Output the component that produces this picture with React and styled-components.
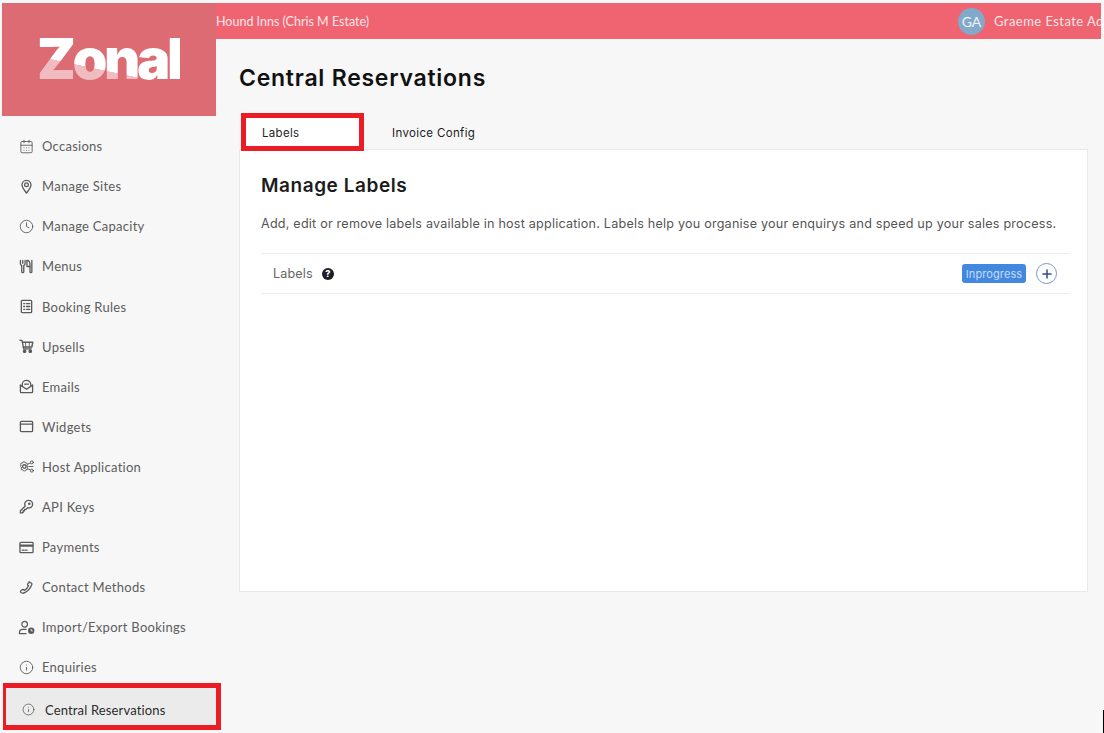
import React from 'react';
import styled, { createGlobalStyle } from 'styled-components';
import { CalendarDays, Clock, Info, Plus } from 'lucide-react';

const Global = createGlobalStyle`
  html, body { margin: 0; padding: 0; background: #f7f7f7; }
  body { overflow: hidden; font-family: "Lato", "Open Sans", sans-serif; }
  * { box-sizing: border-box; }
`;

const Page = styled.div`
  width: 1104px;
  height: 733px;
  padding: 3px 3px 0 2px;
  display: grid;
  grid-template-columns: 214px 1fr;
  grid-template-rows: 36px 1fr;
  background: #f7f7f7;
  position: relative;
  overflow: hidden;
`;

const EdgeMark = styled.span`
  position: absolute;
  right: 0;
  bottom: 0;
  width: 1px;
  height: 23px;
  background: #000;
`;

const Side = styled.div`
  grid-row: 1 / span 2;
  grid-column: 1;
  display: flex;
  flex-direction: column;
`;

const LogoBox = styled.div`
  height: 113px;
  background: #dc6b73;
  display: flex;
  align-items: center;
  padding-left: 35px;
`;

const Wordmark = styled.span`
  font-family: "Inter", sans-serif;
  font-weight: 900;
  font-size: 56px;
  line-height: 1;
  letter-spacing: -3.4px;
  margin-top: -1px;
  color: transparent;
  background: linear-gradient(192deg, #fff 0 64%, #f0bcc0 64.5% 100%);
  -webkit-background-clip: text;
  background-clip: text;
`;

const Nav = styled.nav`
  display: flex;
  flex-direction: column;
  padding-top: 10.1px;
`;

const NavItem = styled.div`
  height: 40.1px;
  display: flex;
  align-items: center;
  gap: 8px;
  padding-left: 17px;
  font-size: 13px;
  letter-spacing: 0.27px;
  color: #5d5d5d;
  svg { width: 15px; height: 15px; flex: none; stroke-width: 1.4; color: #5a5a5a; }
`;

const ActiveItem = styled.div`
  height: 47px;
  width: 218px;
  margin: -4.5px 0 0 1px;
  border: 5px solid #ec1c24;
  border-left-width: 3px;
  background: #ebebeb;
  display: flex;
  align-items: center;
  gap: 10px;
  padding: 7px 0 0 16px;
  font-size: 13px;
  letter-spacing: 0.15px;
  color: #2c2c2c;
  svg { width: 13px; height: 13px; flex: none; stroke-width: 1.4; color: #555; }
`;

const TopBar = styled.header`
  grid-column: 2;
  grid-row: 1;
  background: #f06472;
  color: #fde4e6;
  display: flex;
  align-items: center;
  justify-content: space-between;
  white-space: nowrap;
  overflow: hidden;
`;

const Estate = styled.span`
  font-size: 12.5px;
`;

const User = styled.div`
  display: flex;
  align-items: center;
  gap: 9px;
  width: 143px;
  flex: none;
  font-size: 13px;
  letter-spacing: 0.45px;
`;

const Avatar = styled.span`
  width: 27px;
  height: 27px;
  border-radius: 50%;
  background: #82a9c9;
  color: #eef3f7;
  font-size: 14px;
  letter-spacing: 0;
  display: flex;
  align-items: center;
  justify-content: center;
  flex: none;
`;

const Main = styled.main`
  grid-column: 2;
  grid-row: 2;
  padding: 0 14px 0 23px;
  display: flex;
  flex-direction: column;
  font-family: "Inter", "Open Sans", sans-serif;
`;

const Title = styled.h1`
  margin: 24px 0 0;
  font-size: 23px;
  line-height: 30px;
  font-weight: 600;
  color: #111;
  letter-spacing: 0.75px;
`;

const Tabs = styled.div`
  display: flex;
  margin-top: 20px;
  margin-left: 2px;
  position: relative;
  z-index: 1;
`;

const ActiveTab = styled.div`
  width: 123px;
  height: 38px;
  background: #fff;
  border: 5px solid #ec1c24;
  display: flex;
  align-items: center;
  padding: 1px 0 0 16px;
  font-size: 11.5px;
  letter-spacing: 0.3px;
  color: #222;
`;

const Tab = styled.div`
  height: 38px;
  display: flex;
  align-items: center;
  padding: 1px 0 0 28px;
  font-size: 11.5px;
  letter-spacing: 0.35px;
  color: #222;
`;

const Card = styled.section`
  height: 443px;
  margin-top: -2px;
  margin-right: -1px;
  background: #fff;
  border: 1px solid #e9e9e9;
  padding: 24px 18px 0 21px;
`;

const CardTitle = styled.h2`
  margin: 0;
  font-size: 19px;
  line-height: 24px;
  font-weight: 600;
  letter-spacing: 0.55px;
  color: #1c1c1c;
`;

const Description = styled.p`
  margin: 17px 0 0;
  font-size: 12.6px;
  line-height: 18px;
  letter-spacing: 0.21px;
  color: #555;
  white-space: nowrap;
`;

const Row = styled.div`
  margin-top: 20px;
  height: 41px;
  border-top: 1px solid #ececec;
  border-bottom: 1px solid #ececec;
  display: flex;
  align-items: center;
  padding: 0 12px;
  font-size: 12.6px;
  letter-spacing: 0.15px;
  color: #666;
`;

const Help = styled.span`
  width: 12px;
  height: 12px;
  margin-left: 9px;
  border-radius: 50%;
  background: #1b1f26;
  color: #fff;
  font-size: 9px;
  font-weight: 800;
  letter-spacing: 0;
  display: flex;
  align-items: center;
  justify-content: center;
`;

const Badge = styled.span`
  margin-left: auto;
  width: 64px;
  height: 19px;
  border-radius: 3px;
  background: #4288e0;
  color: #c6dcf6;
  font-size: 11px;
  letter-spacing: 0.1px;
  display: flex;
  align-items: center;
  justify-content: center;
`;

const AddButton = styled.span`
  width: 21px;
  height: 21px;
  margin-left: 10px;
  border: 1.5px solid #7f93c4;
  border-radius: 50%;
  display: flex;
  align-items: center;
  justify-content: center;
  color: #2f4f92;
  svg { width: 14px; height: 14px; stroke-width: 2.6; }
`;

const GlyphSvg = styled.svg`
  && {
    width: ${(p) => (p.$wide ? '17px' : '15px')};
    margin: 0 ${(p) => (p.$wide ? '-1px' : '0')};
  }
`;

const Glyph = ({ children, w = 16 }) => (
  <GlyphSvg $wide={w > 16} viewBox={`0 0 ${w} 16`} fill="none" stroke="currentColor" strokeWidth="1.2" strokeLinecap="round" strokeLinejoin="round">
    {children}
  </GlyphSvg>
);

const Pin = () => (
  <Glyph>
    <path d="M8 15C5.5 11.8 3.2 9.2 3.2 6.2a4.8 4.8 0 0 1 9.6 0C12.8 9.2 10.5 11.8 8 15z" />
    <circle cx="8" cy="6.2" r="2" />
  </Glyph>
);

const Cutlery = () => (
  <Glyph>
    <path d="M1.5 1.5v3.5a2 2 0 0 0 1.4 1.9v6.6a1 1 0 0 0 2.2 0V6.9A2 2 0 0 0 6.5 5V1.5M4 1.5v3" />
    <path d="M9.5 1.5c2.4 0 3.2 2.2 3.2 5v7a1 1 0 0 0 2 0V1.5" transform="translate(-1 0)" />
    <path d="M8.5 1.5v6.5h3.2" />
  </Glyph>
);

const Checklist = () => (
  <Glyph>
    <rect x="2.5" y="1.5" width="11" height="13" rx="1" />
    <path d="M5 5h1M8 5h3.5M5 8h1M8 8h3.5M5 11h1M8 11h3.5" />
  </Glyph>
);

const Cart = () => (
  <Glyph>
    <path d="M1 1.5h2.2l1.8 9h8" />
    <path d="M3.7 3.5h11l-1 5H4.7" strokeWidth="1.6" />
    <path d="M7 3.5v5M11 3.5v5" strokeWidth="0.9" />
    <circle cx="6" cy="13" r="1.3" fill="currentColor" />
    <circle cx="12" cy="13" r="1.3" fill="currentColor" />
  </Glyph>
);

const Mail = () => (
  <Glyph>
    <path d="M1.5 6.5v7a1 1 0 0 0 1 1h11a1 1 0 0 0 1-1v-7" />
    <path d="M1.5 6.5L8 11l6.5-4.5" />
    <path d="M3.5 7.5V5.5a4.5 4 0 0 1 9 0v2" />
    <path d="M6 5.5h4" />
  </Glyph>
);

const WindowIcon = () => (
  <Glyph>
    <rect x="1.5" y="2.5" width="13" height="11" rx="1" />
    <path d="M1.5 5.5h13" />
  </Glyph>
);

const Network = () => (
  <Glyph w={17}>
    <circle cx="6.2" cy="8" r="1.9" />
    <path d="M6.2 3.2l1.1.3.5 1 1.2-.1.7 1-.6 1 .5 1.6-.5 1.6.6 1-.7 1-1.2-.1-.5 1-1.1.3-1.1-.3-.5-1-1.2.1-.7-1 .6-1L2.2 8l.5-1.6-.6-1 .7-1 1.2.1.5-1z" strokeWidth="1" />
    <circle cx="14.2" cy="3.6" r="1.6" strokeWidth="1" />
    <circle cx="14.2" cy="12.4" r="1.6" strokeWidth="1" />
    <path d="M10.5 5.2l2.2-1M10.5 10.8l2.2 1M11 8h4.5" strokeWidth="1" />
  </Glyph>
);

const Key = () => (
  <Glyph>
    <path d="M10.5 1.5a4 4 0 0 1 4 4 4 4 0 0 1-5.2 3.8L7.5 11H6v1.5H4.5V14l-1 .8H1.5v-2.2l5.2-5.1a4 4 0 0 1 3.8-6z" />
    <circle cx="11" cy="5" r="0.7" />
  </Glyph>
);

const Card2 = () => (
  <Glyph>
    <rect x="1" y="2.5" width="14" height="11" rx="1" />
    <path d="M1 6h14" strokeWidth="2.4" strokeLinecap="butt" />
    <path d="M3.5 10.8h2M7 10.8h1.5" />
  </Glyph>
);

const Handset = () => (
  <Glyph>
    <path d="M10.8 1.8l2.6 1.6c.6.4.5 1.2.1 2-1.5 3.6-3.9 6.3-7.3 8-1.6.8-4.4 1-4.6-.9-.2-1.4 1-1.9 2-2.3 1-.3 1.7.3 2.2.9 2-1.2 3.4-2.8 4.4-4.9-.6-.4-1.2-.9-1.1-1.7.1-.7.9-1.5 1.7-1.7z" />
  </Glyph>
);

const UserClock = () => (
  <Glyph w={18}>
    <circle cx="7" cy="4.5" r="3" strokeWidth="1.3" />
    <path d="M1.5 14.5V13a3 3 0 0 1 3-3h4M1.5 14.5h7" strokeWidth="1.3" />
    <circle cx="14" cy="11.5" r="3.4" fill="currentColor" stroke="none" />
    <path d="M14 10v1.7h1.4" stroke="#fff" strokeWidth="0.8" />
  </Glyph>
);

const items = [
  ['Occasions', CalendarDays],
  ['Manage Sites', Pin],
  ['Manage Capacity', Clock],
  ['Menus', Cutlery],
  ['Booking Rules', Checklist],
  ['Upsells', Cart],
  ['Emails', Mail],
  ['Widgets', WindowIcon],
  ['Host Application', Network],
  ['API Keys', Key],
  ['Payments', Card2],
  ['Contact Methods', Handset],
  ['Import/Export Bookings', UserClock],
  ['Enquiries', Info],
];

export default function App() {
  return (
    <>
      <Global />
      <Page>
        <Side>
          <LogoBox><Wordmark>Zonal</Wordmark></LogoBox>
          <Nav>
            {items.map(([label, Icon]) => (
              <NavItem key={label}><Icon />{label}</NavItem>
            ))}
            <ActiveItem><Info />Central Reservations</ActiveItem>
          </Nav>
        </Side>
        <TopBar>
          <Estate>Hound Inns (Chris M Estate)</Estate>
          <User><Avatar>GA</Avatar>Graeme Estate Admin</User>
        </TopBar>
        <Main>
          <Title>Central Reservations</Title>
          <Tabs>
            <ActiveTab>Labels</ActiveTab>
            <Tab>Invoice Config</Tab>
          </Tabs>
          <Card>
            <CardTitle>Manage Labels</CardTitle>
            <Description>Add, edit or remove labels available in host application. Labels help you organise your enquirys and speed up your sales process.</Description>
            <Row>
              Labels
              <Help>?</Help>
              <Badge>Inprogress</Badge>
              <AddButton><Plus /></AddButton>
            </Row>
          </Card>
        </Main>
        <EdgeMark />
      </Page>
    </>
  );
}
